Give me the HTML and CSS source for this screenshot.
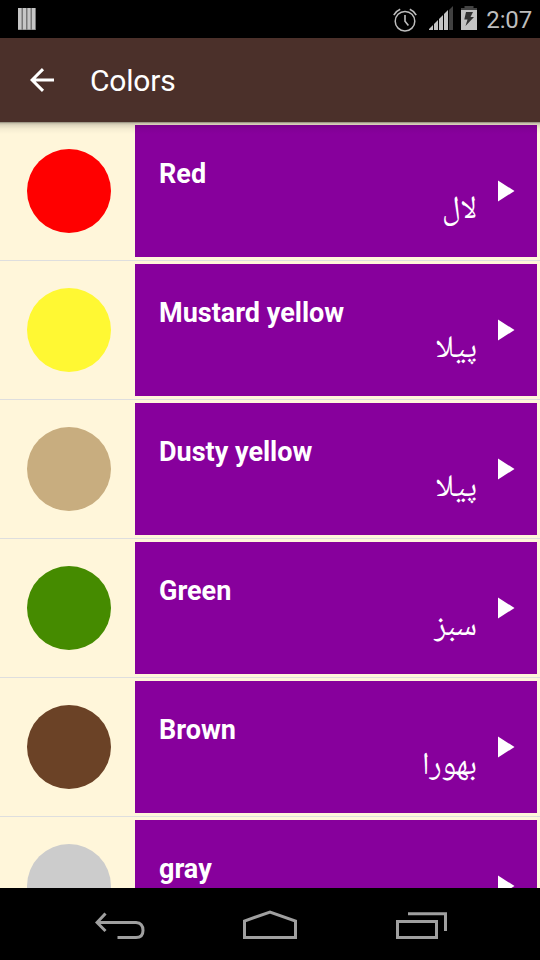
FILE: index.html
```
<!DOCTYPE html>
<html lang="en">
<head>
<meta charset="utf-8">
<title>Colors</title>
<link rel="stylesheet" href="styles.css">
</head>
<body>
<div class="status">
  <svg class="bars" width="18" height="22" viewBox="0 0 18 22"><path fill="#777" d="M0 0h18v22H0z"/><path fill="#c6c6c6" d="M0 0h3.500v21.500H0zM5 0h3v21.500H5zM9.500 0h3v21.500h-3zM14 0h3v21.500h-3z"/></svg>
  <div class="tray">
    <svg class="alarm" width="24" height="24" viewBox="0 0 24 24" fill="none" stroke="#bdbdbd"><circle cx="12" cy="13.200" r="9.800" stroke-width="1.500"/><path stroke-width="1.600" d="M12 7v6.200l3.400 4.200M.8 7.200Q3 3 7.200 1.300M23.200 7.200Q21 3 16.800 1.300"/></svg>
    <svg class="signal" width="24" height="24" viewBox="0 0 24 24"><path fill="#c3c3c3" d="M0 24v-1l4-4v5zM5 24v-6l4-4v10zM10 24V13l4-4v15zM15 24V8l4-4v20z"/><path fill="#404040" d="M20 24V4l4-4v24z"/></svg>
    <svg class="battery" width="16" height="24" viewBox="0 0 16 24"><path fill="#444" d="M3.500 0h9v2H16v3H0V2h3.500z"/><path fill="#c3c3c3" d="M0 4h16v20H0z"/><path fill="#333" d="M5 6h7L9.500 11H13L4.500 20l2-6.500H3.300z"/></svg>
    <span class="clock">2:07</span>
  </div>
</div>
<header class="appbar">
  <svg class="back" width="24" height="24" viewBox="0 0 24 24" fill="none" stroke="#fff" stroke-width="3"><path d="M24 12H2M13 1.100L2.100 12 13 22.900"/></svg>
  <h1>Colors</h1>
</header>
<main class="list">
  <div class="row"><div class="swatch"><i class="dot red"></i></div><div class="card"><div class="words"><b>Red</b><span lang="ur" dir="rtl">لال</span></div><svg class="play" width="17" height="22" viewBox="0 0 17 22"><path fill="#fff" d="M0 .5L16.500 11 0 21.500z"/></svg></div></div>
  <div class="row"><div class="swatch"><i class="dot mustard"></i></div><div class="card"><div class="words"><b>Mustard yellow</b><span lang="ur" dir="rtl">پیلا</span></div><svg class="play" width="17" height="22" viewBox="0 0 17 22"><path fill="#fff" d="M0 .5L16.500 11 0 21.500z"/></svg></div></div>
  <div class="row"><div class="swatch"><i class="dot dusty"></i></div><div class="card"><div class="words"><b>Dusty yellow</b><span lang="ur" dir="rtl">پیلا</span></div><svg class="play" width="17" height="22" viewBox="0 0 17 22"><path fill="#fff" d="M0 .5L16.500 11 0 21.500z"/></svg></div></div>
  <div class="row"><div class="swatch"><i class="dot green"></i></div><div class="card"><div class="words"><b>Green</b><span lang="ur" dir="rtl">سبز</span></div><svg class="play" width="17" height="22" viewBox="0 0 17 22"><path fill="#fff" d="M0 .5L16.500 11 0 21.500z"/></svg></div></div>
  <div class="row"><div class="swatch"><i class="dot brown"></i></div><div class="card"><div class="words"><b>Brown</b><span lang="ur" dir="rtl">بھورا</span></div><svg class="play" width="17" height="22" viewBox="0 0 17 22"><path fill="#fff" d="M0 .5L16.500 11 0 21.500z"/></svg></div></div>
  <div class="row"><div class="swatch"><i class="dot gray"></i></div><div class="card"><div class="words"><b>gray</b></div><svg class="play" width="17" height="22" viewBox="0 0 17 22"><path fill="#fff" d="M0 .5L16.500 11 0 21.500z"/></svg></div></div>
</main>
<nav class="navbar">
  <svg width="50" height="28" viewBox="0 0 50 28" fill="none" stroke="#a0a0a0" stroke-width="3"><path d="M3 10.500H41Q48 11 48 18.500Q48 25.500 41 25.500H22.500M10.500 1.500L2 10.500l8.500 8.500"/></svg>
  <svg class="home" width="54" height="29" viewBox="0 0 54 29" fill="none" stroke="#a0a0a0" stroke-width="3"><path d="M1.500 27.500V11L27 2l25.500 9v16.500z"/></svg>
  <svg class="recent" width="51" height="27" viewBox="0 0 51 27" fill="none" stroke="#a0a0a0" stroke-width="3"><path d="M1.500 9.500h39v16h-39zM12 1.800h37.500V19"/></svg>
</nav>
</body>
</html>
```
FILE: styles.css
```
* { box-sizing: border-box; }
body {
  margin: 0;
  width: 540px;
  height: 960px;
  overflow: hidden;
  display: flex;
  flex-direction: column;
  background: #000;
  font-family: Roboto, sans-serif;
  color: #fff;
}
svg { display: block; flex: none; }
.status {
  height: 38px;
  flex: none;
  display: flex;
  justify-content: space-between;
  align-items: flex-start;
  padding: 6px 8px 0 18px;
}
.bars { margin-top: 2px; }
.tray { display: flex; align-items: flex-start; }
.alarm { margin: 2px 12px 0 0; }
.signal { margin-right: 8px; }
.battery { margin-right: 9px; }
.clock {
  font-size: 24px;
  line-height: 28px;
  letter-spacing: -.15px;
  color: #bdbdbd;
}
.appbar {
  height: 84px;
  flex: none;
  display: flex;
  align-items: center;
  background: #4b302a;
  padding-left: 30px;
}
.appbar h1 {
  margin: 0 0 0 36px;
  font-size: 30px;
  font-weight: 400;
  letter-spacing: -.2px;
}
.list {
  position: relative;
  height: 766px;
  flex: none;
  overflow: hidden;
  background: #fff6da;
}
.list::before {
  content: "";
  position: absolute;
  z-index: 1;
  inset: 0 0 auto;
  height: 12px;
  background: linear-gradient(rgba(0,0,0,.5), rgba(0,0,0,.25) 1px, rgba(0,0,0,.13) 3px, rgba(0,0,0,.04) 7px, transparent);
}
.row {
  height: 139px;
  display: flex;
  padding: 3px 3px 3px 0;
  border-bottom: 1px solid #dedede;
}
.swatch {
  width: 135px;
  padding: 24px 0 0 27px;
}
.dot {
  display: block;
  width: 84px;
  height: 84px;
  border-radius: 50%;
}
.red { background: #f00; }
.mustard { background: #fff833; }
.dusty { background: #c8ad7f; }
.green { background: #458b00; }
.brown { background: #6b4226; }
.gray { background: #ccc; }
.card {
  flex: 1;
  display: flex;
  align-items: center;
  background: #87009c;
  padding: 0 22px 0 24px;
}
.words {
  flex: 1;
  align-self: flex-start;
  display: flex;
  flex-direction: column;
  padding: 33px 21px 0 0;
}
.words b {
  font-size: 27px;
  line-height: 32px;
}
.words span {
  margin-top: 1px;
  font-family: "Noto Naskh Arabic", "DejaVu Sans", sans-serif;
  font-size: 31.5px;
  line-height: 40px;
}
.navbar {
  height: 72px;
  flex: none;
  display: flex;
  align-items: center;
  padding: 4px 0 0 95px;
}
.home { margin: 0 99px 4px 98px; }
.recent { margin-bottom: 1px; }
```
